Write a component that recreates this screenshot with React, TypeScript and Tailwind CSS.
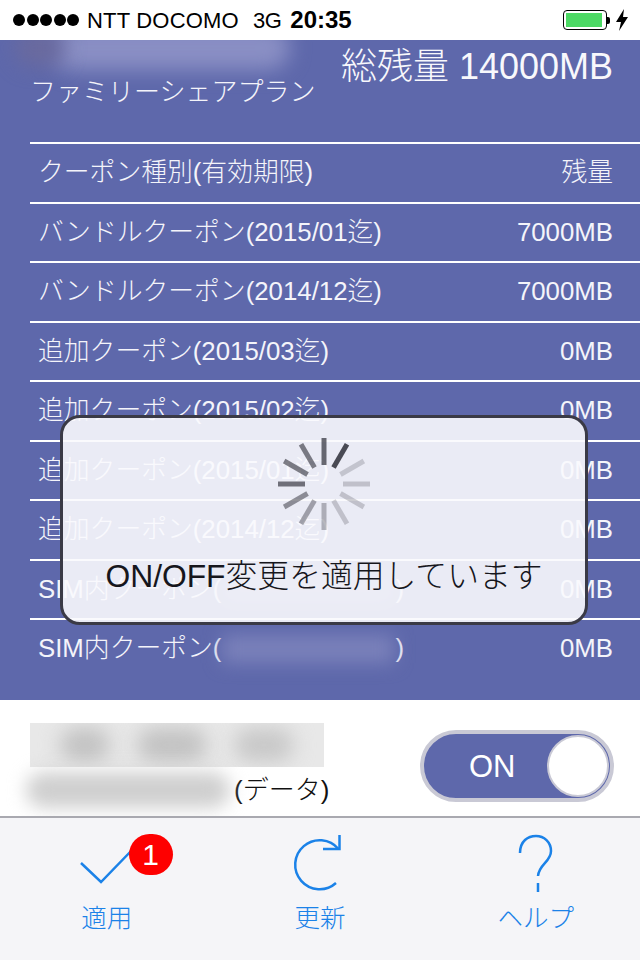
const font = { fontFamily: '"Liberation Sans", "Noto Sans CJK JP", sans-serif' };

const rows: [string, string][] = [
  ["クーポン種別(有効期限)", "残量"],
  ["バンドルクーポン(2015/01迄)", "7000MB"],
  ["バンドルクーポン(2014/12迄)", "7000MB"],
  ["追加クーポン(2015/03迄)", "0MB"],
  ["追加クーポン(2015/02迄)", "0MB"],
  ["追加クーポン(2015/01迄)", "0MB"],
  ["追加クーポン(2014/12迄)", "0MB"],
];

const spokes = [0.7, 0.85, 0.2, 0.22, 0.22, 0.22, 0.32, 0.4, 0.5, 0.65, 0.6, 0.6];

function Spinner() {
  return (
    <svg width="96" height="96" viewBox="-48 -48 96 96" className="block">
      {spokes.map((o, i) => (
        <line key={i} x1="0" y1="-19" x2="0" y2="-46" stroke="#2e2e38" strokeWidth="5" opacity={o} transform={`rotate(${i * 30})`} />
      ))}
    </svg>
  );
}

function Row({ left, right, hasBlur }: { left: string; right: string; hasBlur?: boolean }) {
  return (
    <div className="flex h-[59.5px] items-center justify-between border-t-2 border-white pr-[27px] pl-[8px] text-[25.8px] font-light text-[#f4f4fa]">
      <div className="flex items-center whitespace-nowrap">
        {left}
        {hasBlur && (
          <>
            <span className="mx-[1px] h-[28px] w-[172px] bg-[#7a81ba] blur-[9px]" />)
          </>
        )}
      </div>
      <div>{right}</div>
    </div>
  );
}

export default function App() {
  return (
    <div className="flex h-[960px] w-[640px] flex-col overflow-hidden bg-white" style={font}>
      <div className="flex h-[40px] items-center justify-between bg-white pr-[10px] pl-[13px] text-black">
        <div className="flex items-center">
          <div className="flex gap-[1.5px]">
            {[0, 1, 2, 3, 4].map((i) => (
              <span key={i} className="h-[12px] w-[12px] rounded-full bg-black" />
            ))}
          </div>
          <span className="ml-[8px] text-[22px] tracking-[0.2px]">NTT DOCOMO</span>
          <span className="ml-[14px] text-[22px] tracking-[-0.5px]">3G</span>
          <span className="ml-[9px] text-[24px] font-bold">20:35</span>
        </div>
        <div className="flex items-center">
          <div className="flex h-[20px] w-[44px] items-center rounded-[4px] border border-black p-[2px]">
            <div className="h-full w-[36px] bg-[#4cd964]" />
          </div>
          <div className="h-[7px] w-[3px] rounded-r-[2px] bg-black" />
          <svg width="16" height="22" viewBox="0 0 16 22" className="ml-[4px] block">
            <path d="M10 0 L2 13 H7 L5 22 L14 8 H9 Z" fill="#000" />
          </svg>
        </div>
      </div>

      <div className="relative h-[660px] overflow-hidden bg-[#5e68ab]">
        <div className="absolute top-[-14px] left-[50px] h-[44px] w-[240px] rounded-full bg-[#8a8fc4] blur-[10px]" />
        <div className="absolute top-[-10px] left-[15px] h-[36px] w-[50px] rounded-full bg-[#6a6a9e] blur-[10px]" />

        <div className="relative flex h-[102px] items-start justify-between pr-[27px] pl-[30px]">
          <div className="mt-[35px] text-[26px] leading-[34px] font-light whitespace-nowrap text-[#f4f4fa]">ファミリーシェアプラン</div>
          <div className="mt-[5px] text-[36px] leading-[44px] font-light whitespace-nowrap text-[#f8f8fc]">総残量 14000MB</div>
        </div>

        <div className="relative ml-[30px]">
          {rows.map(([l, r]) => (
            <Row key={l} left={l} right={r} />
          ))}
          <Row left="SIM内クーポン(" right="0MB" hasBlur />
          <Row left="SIM内クーポン(" right="0MB" hasBlur />
        </div>

        <div className="absolute top-[375px] left-[60px] flex h-[210px] w-[528px] flex-col items-center rounded-[20px] border-[3px] border-[#3a3a46] bg-[#fafafd]/90">
          <div className="mt-[18px]">
            <Spinner />
          </div>
          <div className="mt-[24px] text-[31.8px] leading-[40px] font-light whitespace-nowrap text-[#16161c]">ON/OFF変更を適用しています</div>
        </div>
      </div>

      <div className="flex h-[116px] items-start justify-between overflow-hidden bg-white pt-[23px] pr-[26px] pl-[30px]">
        <div className="flex flex-col">
          <div className="flex h-[44px] w-[294px] items-center justify-between overflow-hidden bg-[#e8e8e8] px-[30px]">
            <div className="h-[34px] w-[50px] rounded-full bg-[#c2c2c2] blur-[10px]" />
            <div className="h-[34px] w-[70px] rounded-full bg-[#c2c2c2] blur-[10px]" />
            <div className="h-[34px] w-[60px] rounded-full bg-[#c8c8c8] blur-[10px]" />
          </div>
          <div className="mt-[5px] flex items-center">
            <div className="-ml-[4px] h-[36px] w-[204px] rounded-full bg-[#cfcfcf] blur-[9px]" />
            <span className="ml-[4px] text-[26px] leading-[32px] font-light whitespace-nowrap text-[#111]">(データ)</span>
          </div>
        </div>
        <div className="mt-[7px] flex h-[72px] w-[194px] items-center justify-between rounded-full border-[4px] border-[#c9c9d5] bg-[#5e68ab] pr-[1px] pl-[45px]">
          <span className="text-[31px] leading-none text-white">ON</span>
          <div className="h-[62px] w-[62px] rounded-full border-[2px] border-[#c9c9d5] bg-white" />
        </div>
      </div>

      <div className="grid h-[144px] grid-cols-3 border-t-2 border-[#a9a9b0] bg-[#f5f5f8] text-[#1b82e8]">
        <div className="flex flex-col items-center">
          <div className="relative h-[74px] w-[100px]">
            <svg width="60" height="50" viewBox="0 0 60 50" className="absolute top-[25px] left-[23px] block">
              <path d="M1 20 L21 39 L54 5" fill="none" stroke="#1b82e8" strokeWidth="2.5" />
            </svg>
            <div className="absolute top-[16px] left-[72px] flex h-[41px] w-[44px] items-center justify-center rounded-full bg-[#fe0000] text-[30px] leading-none text-white">1</div>
          </div>
          <div className="mt-[10px] text-[25.5px] leading-[32px] font-light">適用</div>
        </div>
        <div className="flex flex-col items-center">
          <div className="h-[74px] w-[60px]">
            <svg width="60" height="74" viewBox="0 0 60 74" className="block">
              <path d="M46 65 A 24.5 24.5 0 1 1 48.5 31" fill="none" stroke="#1b82e8" strokeWidth="2.5" />
              <path d="M33 31 H49.5 V17" fill="none" stroke="#1b82e8" strokeWidth="2.5" />
            </svg>
          </div>
          <div className="mt-[10px] text-[25.5px] leading-[32px] font-light">更新</div>
        </div>
        <div className="flex flex-col items-center pl-[5px]">
          <div className="h-[74px] w-[60px]">
            <svg width="60" height="74" viewBox="0 0 60 74" className="block">
              <path d="M14 35 C 14 23 22 18 30 18 C 38 18 45 24 45 33 C 45 44 33 46 32 58" fill="none" stroke="#1b82e8" strokeWidth="2.5" />
              <path d="M32 65 V74" fill="none" stroke="#1b82e8" strokeWidth="2.5" />
            </svg>
          </div>
          <div className="mt-[10px] text-[25.5px] leading-[32px] font-light whitespace-nowrap">ヘルプ</div>
        </div>
      </div>
    </div>
  );
}
